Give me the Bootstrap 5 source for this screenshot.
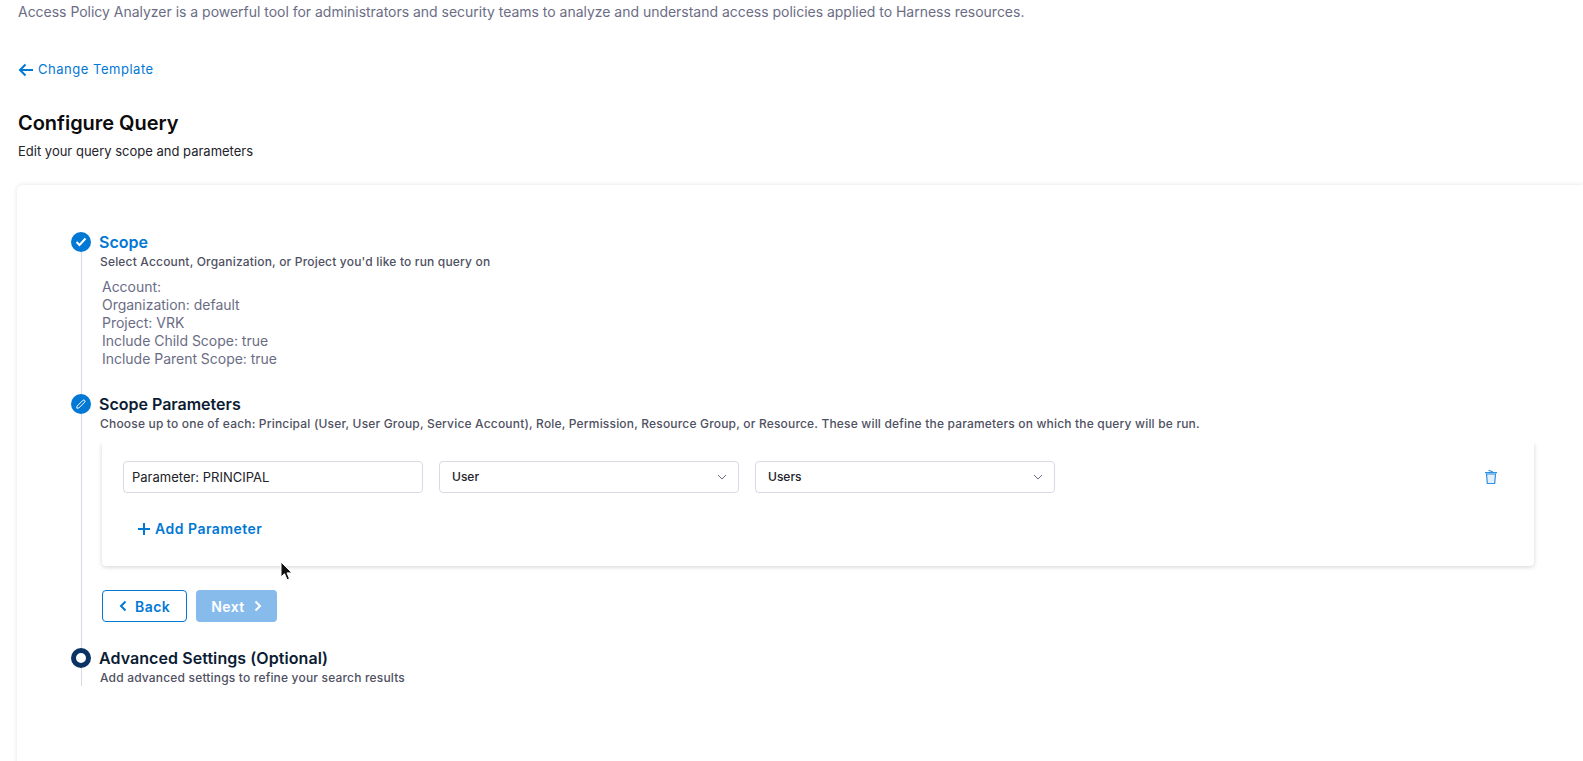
<!DOCTYPE html>
<html lang="en">
<head>
  <meta charset="UTF-8" />
  <title>Access Policy Analyzer</title>
  <link href="https://cdn.jsdelivr.net/npm/bootstrap@5.3.0/dist/css/bootstrap.min.css" rel="stylesheet" />
  <style>
    html, body { height: 761px; overflow: hidden; }
    body { font-family: Inter, "Liberation Sans", sans-serif; background: #fff; position: relative; }
    .page-wrap { padding: 3px 0 0 18px; }
    .intro { font-size: 14px; line-height: 18px; letter-spacing: -.02px; color: #6b6d85; margin: 0; }
    .back-link { margin-top: 39px; height: 20px; font-size: 13px; letter-spacing: .52px; color: #0278d5; text-decoration: none; }
    .page-title { margin: 29px 0 0; font-size: 20px; line-height: 28px; font-weight: 600; letter-spacing: -.03px; color: #0b0b0d; }
    .page-sub { margin: 5px 0 0; font-size: 13px; line-height: 18px; color: #22222a; }
    .query-card { margin: 25px 0 0 -1px; height: 600px; padding: 47px 49px 0 54px; border-radius: 6px 0 0 0; box-shadow: 0 0 4px rgba(96, 97, 112, .18); }
    .step-rail { width: 20px; flex: none; }
    .step-dot { width: 20px; height: 20px; border-radius: 50%; background: #0278d5; flex: none; }
    .step-dot.dot-open { background: #fff; border: 5px solid #0a3364; }
    .step-line { width: 1px; flex-grow: 1; background: #d9dae5; }
    .step-body { padding-left: 8px; min-width: 0; }
    .step-title { margin: 0; font-size: 16px; line-height: 20px; font-weight: 600; color: #0b1c33; }
    .step-title.is-done { color: #0278d5; }
    .step-title.is-wide { letter-spacing: .07px; }
    .step-note { margin: 0 0 0 1px; font-size: 12px; line-height: 20px; font-weight: 500; letter-spacing: .18px; color: #4f5162; }
    .scope-list { margin: 6px 0 0 3px; padding-bottom: 26px; font-size: 14px; line-height: 18px; letter-spacing: -.02px; color: #6b6d85; }
    .param-panel { margin: 9px 0 0 3px; height: 123px; padding: 18px 21px; border-radius: 0 0 4px 4px; box-shadow: 0 1px 4px rgba(96, 97, 112, .28); clip-path: inset(0 -6px -6px -6px); }
    .param-field { width: 300px; height: 32px; min-height: 32px; padding: 0 8px; font-size: 13px; color: #22222a; border-color: #d9dae5; border-radius: 4px; }
    .param-select { padding-left: 12px; font-weight: 500; font-size: 12px; background-size: 12px 10px; background-position: right 10px center; background-image: url("data:image/svg+xml,%3csvg xmlns='http://www.w3.org/2000/svg' viewBox='0 0 12 10'%3e%3cpath fill='none' stroke='%236b6d85' stroke-width='1' d='M2 3l4 4 4-4'/%3e%3c/svg%3e"); }
    .add-param { margin: 26px 0 0 15px; font-size: 14px; font-weight: 600; letter-spacing: .5px; color: #0278d5; text-decoration: none; line-height: 20px; gap: 5px; }
    .trash-btn { margin: 8px 15px 0 0; line-height: 0; }
    .step-actions { margin: 24px 0 0 3px; padding-bottom: 26px; gap: 9px; }
    .act-btn { height: 32px; padding: 0 16px; font-size: 14px; font-weight: 600; letter-spacing: .45px; border-radius: 4px; display: flex; align-items: center; gap: 8px; }
    .act-back { color: #0278d5; border: 1px solid #0278d5; background: #fff; }
    .act-next { color: #fff; border: 0; background: #86bbec; padding: 0 15px 0 15px; gap: 9px; }
    .step-end { height: 38px; }
    .cursor-mark { position: absolute; left: 280px; top: 561px; }
  </style>
</head>
<body>
  <div class="page-wrap">
    <p class="intro">Access Policy Analyzer is a powerful tool for administrators and security teams to analyze and understand access policies applied to Harness resources.</p>

    <a href="#" class="back-link d-flex align-items-center gap-1">
      <svg width="16" height="14" viewBox="0 0 16 14" fill="none" stroke="#0278d5" stroke-width="2"><path d="M15 7H2M7.5 1.5L2 7l5.5 5.5"/></svg>
      Change Template
    </a>

    <h1 class="page-title">Configure Query</h1>
    <p class="page-sub">Edit your query scope and parameters</p>

    <div class="query-card bg-white">
      <!-- Scope -->
      <div class="d-flex">
        <div class="step-rail d-flex flex-column align-items-center">
          <div class="step-dot d-flex align-items-center justify-content-center">
            <svg width="12" height="10" viewBox="0 0 12 10" fill="none" stroke="#fff" stroke-width="2"><path d="M1.5 5l3 3 6-6.5"/></svg>
          </div>
          <div class="step-line"></div>
        </div>
        <div class="step-body flex-grow-1">
          <h2 class="step-title is-done">Scope</h2>
          <p class="step-note">Select Account, Organization, or Project you'd like to run query on</p>
          <div class="scope-list">
            <div>Account:</div>
            <div>Organization: default</div>
            <div>Project: VRK</div>
            <div>Include Child Scope: true</div>
            <div>Include Parent Scope: true</div>
          </div>
        </div>
      </div>

      <!-- Scope Parameters -->
      <div class="d-flex">
        <div class="step-rail d-flex flex-column align-items-center">
          <div class="step-dot d-flex align-items-center justify-content-center">
            <svg width="12" height="12" viewBox="0 0 12 12" fill="none" stroke="#fff" stroke-width="1"><path d="M2 8.2L8 2.2a1.3 1.3 0 0 1 1.8 1.8L3.8 10 1.8 10.2z"/></svg>
          </div>
          <div class="step-line"></div>
        </div>
        <div class="step-body flex-grow-1">
          <h2 class="step-title">Scope Parameters</h2>
          <p class="step-note">Choose up to one of each: Principal (User, User Group, Service Account), Role, Permission, Resource Group, or Resource. These will define the parameters on which the query will be run.</p>
          <div class="param-panel bg-white">
            <div class="d-flex justify-content-between">
              <div class="d-flex gap-3">
                <input type="text" class="form-control param-field" value="Parameter: PRINCIPAL">
                <select class="form-select param-field param-select"><option>User</option></select>
                <select class="form-select param-field param-select"><option>Users</option></select>
              </div>
              <div class="trash-btn">
                <svg width="14" height="16" viewBox="0 0 14 16" fill="none" stroke="#2f8fe3" stroke-width="1.2"><path d="M2.500 5h9l-.8 9.500H3.300z" fill="#e3effa"/><path d="M1 3.600h12M4.500 1.200l4.500 1.800"/></svg>
              </div>
            </div>
            <a href="#" class="add-param d-inline-flex align-items-center">
              <svg width="12" height="12" viewBox="0 0 12 12" stroke="#0278d5" stroke-width="2"><path d="M6 0v12M0 6h12"/></svg>
              Add Parameter
            </a>
          </div>
          <div class="step-actions d-flex">
            <button type="button" class="btn act-btn act-back">
              <svg width="8" height="12" viewBox="0 0 8 12" fill="none" stroke="#0278d5" stroke-width="2"><path d="M6.500 1.500L2 6l4.500 4.500"/></svg>
              Back
            </button>
            <button type="button" class="btn act-btn act-next">
              Next
              <svg width="8" height="12" viewBox="0 0 8 12" fill="none" stroke="#fff" stroke-width="2"><path d="M1.500 1.500L6 6l-4.500 4.500"/></svg>
            </button>
          </div>
        </div>
      </div>

      <!-- Advanced Settings -->
      <div class="d-flex">
        <div class="step-rail d-flex flex-column align-items-center">
          <div class="step-dot dot-open"></div>
          <div class="step-line"></div>
        </div>
        <div class="step-body step-end flex-grow-1">
          <h2 class="step-title is-wide">Advanced Settings (Optional)</h2>
          <p class="step-note">Add advanced settings to refine your search results</p>
        </div>
      </div>
    </div>
  </div>

  <svg class="cursor-mark" width="14" height="20" viewBox="0 0 14 20"><path d="M1 1v15l3.500-3.300 2.500 6 2.500-1-2.500-5.800h5z" fill="#111" stroke="#fff" stroke-width="1"/></svg>

  <script src="https://cdn.jsdelivr.net/npm/bootstrap@5.3.0/dist/js/bootstrap.bundle.min.js"></script>
</body>
</html>
